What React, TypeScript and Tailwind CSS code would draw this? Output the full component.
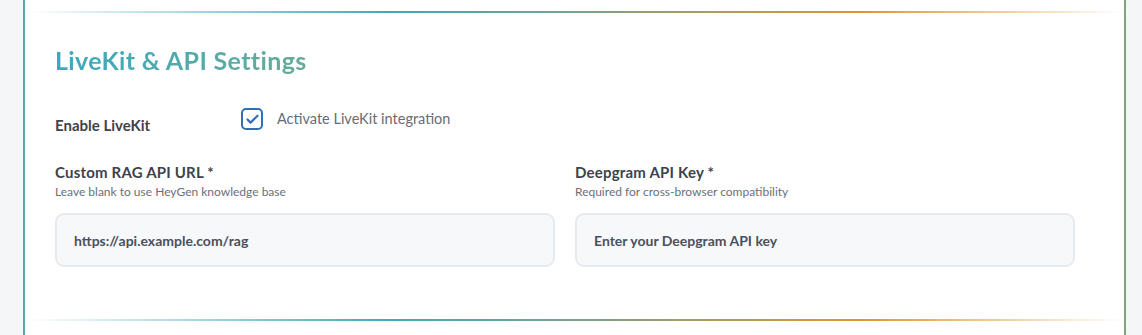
import { Check } from 'lucide-react';

const divider =
  'h-[2px] bg-[linear-gradient(90deg,rgba(64,170,190,0)_0%,#40a9bb_33%,#7fa285_52%,#e0952e_76%,rgba(224,149,46,0)_100%)]';

function Field({
  label,
  hint,
  placeholder,
  value,
}: {
  label: string;
  hint: string;
  placeholder: string;
  value?: string;
}) {
  return (
    <div className="flex flex-col">
      <label className="text-[15px] font-bold leading-[20px] tracking-[0.2px] text-[#3d424d]">
        {label} *
      </label>
      <p className="mt-[2px] text-[12px] leading-[16px] text-[#6b7078]">{hint}</p>
      <input
        type="text"
        defaultValue={value}
        placeholder={placeholder}
        className="mt-[13px] h-[54px] w-full rounded-[9px] border-2 border-[#e6e9ed] bg-[#f7f8fa] px-[17px] text-[14px] font-bold text-[#4b505c] placeholder:text-[#4b505c] outline-none"
      />
    </div>
  );
}

export default function App() {
  return (
    <div
      className="min-h-screen bg-[#f4f6f8] pl-[23px] pr-[16px]"
      style={{ fontFamily: 'Lato, "Noto Sans", sans-serif' }}
    >
      <div className="border-l-2 border-r-2 border-l-[#56aaa6] border-r-[#86a27b] bg-white">
        {/* end of previous section */}
        <div className="h-[11px]" />
        <div className={divider} />

        {/* LiveKit & API Settings */}
        <section className="px-[30px] pb-[52px] pt-[31px]">
          <h2 className="inline-block bg-gradient-to-r from-[#37a9c0] to-[#67aa97] bg-clip-text text-[25px] font-bold leading-[32px] tracking-[0.35px] text-transparent">
            LiveKit &amp; API Settings
          </h2>

          <div className="mt-[32px] flex items-start">
            <span className="w-[186px] pt-[7px] pb-[2px] text-[15px] font-bold leading-[20px] text-[#3d424d]">
              Enable LiveKit
            </span>
            <label className="flex items-center gap-[14px]">
              <span className="flex h-[22px] w-[22px] items-center justify-center rounded-[5px] border-2 border-[#2f70b4] bg-white">
                <Check size={15} strokeWidth={3.5} className="text-[#2f70b4]" />
              </span>
              <span className="text-[14.5px] leading-[20px] text-[#676c75]">
                Activate LiveKit integration
              </span>
            </label>
          </div>

          <div className="mt-[25px] grid w-[1020px] grid-cols-2 gap-[20px]">
            <Field
              label="Custom RAG API URL"
              hint="Leave blank to use HeyGen knowledge base"
              placeholder="https://api.example.com/rag"
            />
            <Field
              label="Deepgram API Key"
              hint="Required for cross-browser compatibility"
              placeholder="Enter your Deepgram API key"
            />
          </div>
        </section>

        <div className={divider} />
        <div className="h-[14px]" />
      </div>
    </div>
  );
}
